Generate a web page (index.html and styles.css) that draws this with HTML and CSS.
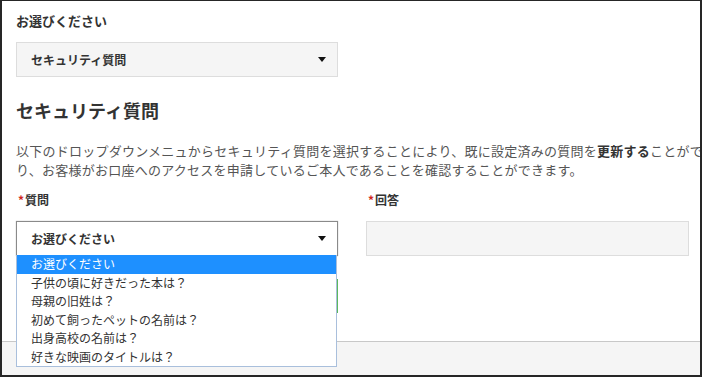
FILE: index.html
```html
<!DOCTYPE html>
<html lang="ja">
<head>
<meta charset="utf-8">
<meta name="viewport" content="width=device-width, initial-scale=1">
<title>セキュリティ質問</title>
<link rel="stylesheet" href="styles.css">
</head>
<body>
<div class="frame">
  <div class="content">
    <div class="top-label">お選びください</div>
    <div class="select select-grey">
      <span>セキュリティ質問</span>
      <span class="caret"></span>
    </div>

    <h2 class="heading">セキュリティ質問</h2>
    <p class="intro">以下のドロップダウンメニュからセキュリティ質問を選択することにより、既に設定済みの質問を<b>更新する</b>ことができた<br>り、お客様がお口座へのアクセスを申請しているご本人であることを確認することができます。</p>

    <div class="fields">
      <div class="field">
        <label class="field-label"><span class="req">*</span>質問</label>
        <div class="select select-open">
          <span>お選びください</span>
          <span class="caret"></span>
          <ul class="options">
            <li class="selected">お選びください</li>
            <li>子供の頃に好きだった本は？</li>
            <li>母親の旧姓は？</li>
            <li>初めて飼ったペットの名前は？</li>
            <li>出身高校の名前は？</li>
            <li>好きな映画のタイトルは？</li>
          </ul>
        </div>
        <button type="button" class="btn-submit"></button>
      </div>
      <div class="field">
        <label class="field-label"><span class="req">*</span>回答</label>
        <div class="answer"></div>
      </div>
    </div>
  </div>
  <div class="footer"></div>
</div>
</body>
</html>
```

FILE: styles.css
```css
* {
  box-sizing: border-box;
}

body {
  margin: 0;
  overflow: hidden;
  font-family: "Noto Sans CJK JP", "Noto Sans", sans-serif;
  color: #333;
  background: #fff;
}

.frame {
  height: 377px;
  border: solid #262626;
  border-width: 1px 2px 2px 2px;
  overflow: hidden;
  display: flex;
  flex-direction: column;
}

.content {
  padding: 0 14px;
}

.top-label {
  margin-top: 10px;
  font-size: 13px;
  line-height: 20px;
  font-weight: bold;
}

.select {
  position: relative;
  width: 322px;
  height: 35px;
  border: 1px solid #ddd;
  display: flex;
  align-items: center;
  justify-content: space-between;
  padding: 0 11px 0 14px;
  font-size: 12px;
  font-weight: bold;
  color: #333;
}

.select-grey {
  margin-top: 11px;
  background: #f5f5f5;
}

.caret {
  width: 0;
  height: 0;
  border-left: 4.5px solid transparent;
  border-right: 4.5px solid transparent;
  border-top: 5px solid #111;
}

.heading {
  margin: 21px 0 0;
  font-size: 18px;
  line-height: 25px;
  font-weight: bold;
  color: #333;
}

.intro {
  margin: 18px 0 0;
  white-space: nowrap;
  font-size: 13px;
  line-height: 19px;
  letter-spacing: 0.25px;
  color: #555;
}

.intro b {
  color: #333;
}

.fields {
  display: grid;
  grid-template-columns: 322px 323px;
  column-gap: 28px;
  margin-top: 12px;
}

.field-label {
  display: block;
  font-size: 12px;
  line-height: 18px;
  font-weight: bold;
  padding-left: 2px;
}

.req {
  color: #d0271d;
  margin-right: 1px;
}

.select-open {
  margin-top: 12px;
  background: #fff;
  border: 1px solid #8a8a8a;
  box-shadow: 0 0 1px #aaa;
}

.options {
  position: absolute;
  top: 100%;
  left: -1px;
  width: 321px;
  margin: 0;
  padding: 0;
  list-style: none;
  background: #fff;
  border: 1px solid #a9bfdc;
  border-top: none;
  z-index: 5;
}

.options li {
  height: 18.5px;
  line-height: 18.5px;
  padding-left: 14px;
  font-size: 12px;
  font-weight: normal;
  color: #333;
}

.options li.selected {
  background: #1e90ff;
  color: #fff;
}

.btn-submit {
  display: block;
  width: 322px;
  height: 34px;
  margin-top: 23px;
  background: #7cc47f;
  border: 1px solid #5cb85c;
}

.answer {
  margin-top: 12px;
  height: 35px;
  background: #f5f5f5;
  border: 1px solid #ddd;
}

.footer {
  flex: 1;
  margin-top: 28px;
  border-top: 1px solid #c8c8c8;
  background: #f5f5f5;
}
```
